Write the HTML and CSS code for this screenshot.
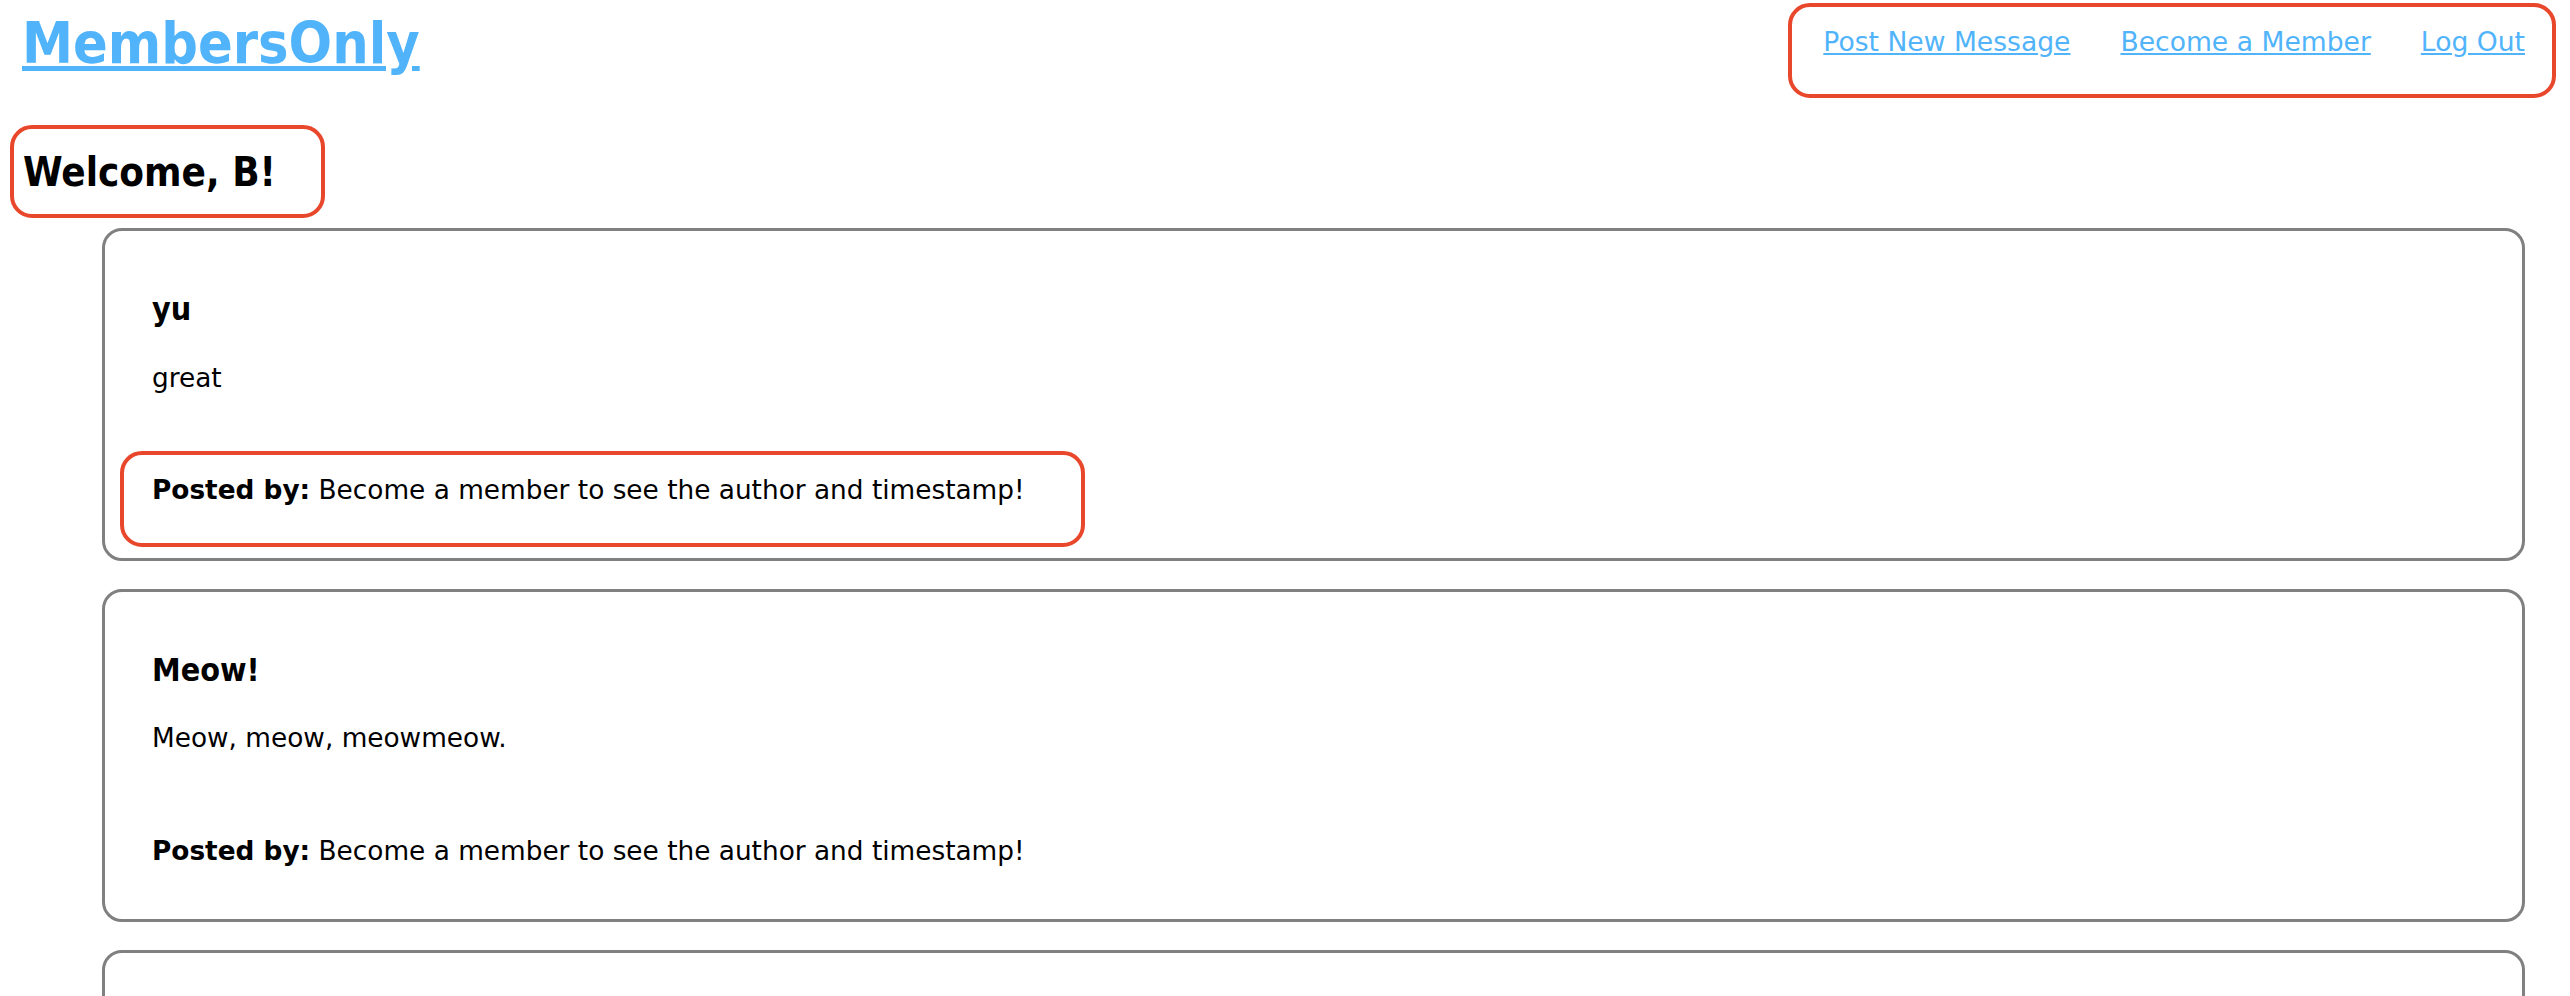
FILE: index.html
```html
<!DOCTYPE html>
<html lang="en">
<head>
<meta charset="utf-8">
<title>MembersOnly</title>
<link rel="stylesheet" href="styles.css">
</head>
<body>
<div class="page">
  <header class="topbar">
    <h1 class="brand"><a href="#">MembersOnly</a></h1>
    <nav class="nav note">
      <a href="#">Post New Message</a>
      <a href="#">Become a Member</a>
      <a href="#">Log Out</a>
    </nav>
  </header>

  <section class="welcome note">
    <h2>Welcome, B!</h2>
  </section>

  <main class="feed">
    <article class="card">
      <h3>yu</h3>
      <p class="body">great</p>
      <p class="meta note"><strong>Posted by:</strong> Become a member to see the author and timestamp!</p>
    </article>
    <article class="card">
      <h3>Meow!</h3>
      <p class="body">Meow, meow, meowmeow.</p>
      <p class="meta"><strong>Posted by:</strong> Become a member to see the author and timestamp!</p>
    </article>
    <article class="card card-more"></article>
  </main>
</div>
</body>
</html>
```

FILE: styles.css
```css
html {
  overflow: hidden;
}

body {
  margin: 0;
  background: #ffffff;
  color: #000000;
  font-family: "DejaVu Sans", "Liberation Sans", sans-serif;
  font-size: 26.35px;
  line-height: 1.164;
}

a {
  color: #51b4fa;
}

.page {
  display: flex;
  flex-direction: column;
  align-items: stretch;
  padding: 3px 14px 0 10px;
}

.topbar {
  display: flex;
  justify-content: space-between;
  align-items: flex-start;
}

.brand {
  margin: 7px 0 0 12px;
  font-family: "DejaVu Sans Condensed", "DejaVu Sans", sans-serif;
  font-stretch: condensed;
  font-weight: bold;
  font-size: 57px;
  line-height: 1.164;
}

.note {
  border: 4px solid #e9472b;
  border-radius: 22px;
}

.nav {
  display: flex;
  gap: 50px;
  padding: 20px 27px 36px 31px;
  font-size: 26.6px;
  line-height: 30.8px;
}

.welcome {
  align-self: flex-start;
  margin-top: 27px;
  padding: 20px 45px 19px 9px;
}

.welcome h2 {
  margin: 0;
  font-family: "DejaVu Sans Condensed", "DejaVu Sans", sans-serif;
  font-stretch: condensed;
  font-weight: bold;
  font-size: 40px;
  line-height: 1.164;
}

.feed {
  display: flex;
  flex-direction: column;
  gap: 28px;
  margin: 10px 31px 0 92px;
}

.card {
  border: 3px solid #808080;
  border-radius: 20px;
  padding: 60px 47px 52px 47px;
}

.card-more {
  min-height: 220px;
}

.card h3 {
  margin: 0;
  font-family: "DejaVu Sans Condensed", "DejaVu Sans", sans-serif;
  font-stretch: condensed;
  font-weight: bold;
  font-size: 32px;
  line-height: 1.164;
}

.card .body {
  margin: 34px 0 0;
  line-height: 30.8px;
}

.card .meta {
  margin: 82px 0 0;
  line-height: 30.8px;
}

.card .meta.note {
  width: fit-content;
  margin: 58px -60px -41px -32px;
  padding: 20px 56px 37px 28px;
}
```
